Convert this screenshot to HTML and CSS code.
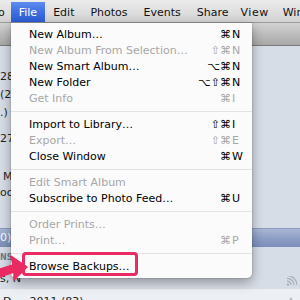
FILE: index.html
```html
<!DOCTYPE html>
<html>
<head>
<meta charset="utf-8">
<link rel="stylesheet" href="styles.css">
</head>
<body>
<div class="screen">
  <div class="menubar">
    <span class="mb-item mb-app">o</span>
    <span class="mb-item active">File</span>
    <span class="mb-item">Edit</span>
    <span class="mb-item">Photos</span>
    <span class="mb-item">Events</span>
    <span class="mb-item">Share</span>
    <span class="mb-item mb-view">View</span>
    <span class="mb-item">Window</span>
  </div>
  <div class="window">
    <div class="toolbar"></div>
    <div class="list">
      <div class="group g1">
        <div class="row">28</div>
        <div class="row">(2.</div>
        <div class="row">.)</div>
      </div>
      <div class="group g2">
        <div class="row">27</div>
      </div>
      <div class="group g3">
        <div class="row tight"><span class="ind">M</span></div>
        <div class="row tight">oo</div>
      </div>
      <div class="row selected">0)</div>
      <div class="row header">NS</div>
      <div class="row item">s, N
        <svg class="shared" width="12" height="10" viewBox="0 0 12 10"><circle cx="2" cy="8.5" r="1.2" fill="#a9b0bb"/><path d="M1 5.2a4 4 0 0 1 4.2 3.9M1 2.3a7 7 0 0 1 7.1 6.9M1 -0.6a10 10 0 0 1 10 9.8" fill="none" stroke="#a9b0bb" stroke-width="1.2"/></svg>
      </div>
      <div class="row item last"><span class="ind">D</span><span class="year">2011 (83)</span>
        <svg class="shared2" width="10" height="8" viewBox="0 0 10 8"><path d="M5 1 L9 8 L1 8 Z" fill="#b4bac4"/></svg>
      </div>
    </div>
  </div>

  <div class="menu">
    <div class="mi"><span class="lbl">New Album…</span><span class="sc"><span class="mods">⌘</span><span class="key">N</span></span></div>
    <div class="mi dis"><span class="lbl">New Album From Selection…</span><span class="sc"><span class="mods">⇧⌘</span><span class="key">N</span></span></div>
    <div class="mi"><span class="lbl">New Smart Album…</span><span class="sc"><span class="mods">⌥⌘</span><span class="key">N</span></span></div>
    <div class="mi"><span class="lbl">New Folder</span><span class="sc"><span class="mods">⌥⇧⌘</span><span class="key">N</span></span></div>
    <div class="mi dis"><span class="lbl">Get Info</span><span class="sc"><span class="mods">⌘</span><span class="key">I</span></span></div>
    <div class="sep"></div>
    <div class="mi"><span class="lbl">Import to Library…</span><span class="sc"><span class="mods">⇧⌘</span><span class="key">I</span></span></div>
    <div class="mi dis"><span class="lbl">Export…</span><span class="sc"><span class="mods">⇧⌘</span><span class="key">E</span></span></div>
    <div class="mi"><span class="lbl">Close Window</span><span class="sc"><span class="mods">⌘</span><span class="key">W</span></span></div>
    <div class="sep"></div>
    <div class="mi dis"><span class="lbl">Edit Smart Album</span></div>
    <div class="mi"><span class="lbl">Subscribe to Photo Feed…</span><span class="sc"><span class="mods">⌘</span><span class="key">U</span></span></div>
    <div class="sep"></div>
    <div class="mi dis"><span class="lbl">Order Prints…</span></div>
    <div class="mi dis"><span class="lbl">Print…</span><span class="sc"><span class="mods">⌘</span><span class="key">P</span></span></div>
    <div class="sep"></div>
    <div class="mi"><span class="lbl">Browse Backups…</span></div>
  </div>

  <div class="callout"></div>
  <svg class="arrow" width="30" height="36" viewBox="0 0 30 36">
    <path d="M-3 21 L13 16 L11 7 L27 18 L14 31 L14 23 L-3 29 Z" fill="#ea2a62" stroke="#ea2a62" stroke-width="1.5" stroke-linejoin="round"/>
  </svg>
</div>
</body>
</html>
```

FILE: styles.css
```css
html, body {
  margin: 0;
  padding: 0;
}
body {
  width: 300px;
  height: 300px;
  overflow: hidden;
  font-family: "DejaVu Sans", "Liberation Sans", sans-serif;
  font-size: 11px;
  color: #111;
}
.screen {
  position: relative;
  width: 300px;
  height: 300px;
  overflow: hidden;
  background: #d6dde6;
  display: flex;
  flex-direction: column;
}
.menubar {
  height: 23px;
  flex: none;
  display: flex;
  align-items: stretch;
  background: linear-gradient(#ececec, #e2e2e2 40%, #d3d3d3);
  border-bottom: 1px solid #9a9a9a;
  box-sizing: border-box;
}
.mb-item {
  display: flex;
  align-items: center;
  padding: 0 8px;
  color: #111;
  white-space: nowrap;
  margin-top: 2px;
}
.mb-app {
  padding: 0;
  margin-left: -2px;
  margin-right: 6px;
}
.mb-view {
  letter-spacing: 0.5px;
  padding: 0 6px 0 4px;
}
.mb-item.active {
  background: linear-gradient(#5f8cee, #3f6fe0 50%, #2c5cd6);
  color: #fff;
}
.window {
  flex: 1;
  display: flex;
  flex-direction: column;
}
.toolbar {
  height: 22px;
  flex: none;
  background: linear-gradient(#d3d3d3, #bdbdbd 50%, #a8a8a8);
  border-bottom: 1px solid #7a7a7a;
}
.list {
  flex: 1;
  display: flex;
  flex-direction: column;
  background: #d7dde6;
}
.row {
  height: 18px;
  line-height: 18px;
  white-space: nowrap;
  color: #1e1e1e;
  position: relative;
  flex: none;
}
.g1 { margin-top: 22px; }
.g2 { margin-top: 8px; }
.g3 { margin-top: 21px; }
.row.tight { height: 16px; line-height: 16px; }
.ind { padding-left: 3px; }
.row.selected {
  margin-top: 27px;
  background: linear-gradient(#a9b7d4, #8e9fc6 50%, #7b8eba);
  border-top: 1px solid #8a9bc3;
  color: #fff;
  height: 18px;
}
.row.header {
  height: 22px;
  line-height: 22px;
  font-size: 8px;
  font-weight: bold;
  color: #6f7a8a;
}
.row.item { height: 20px; line-height: 20px; }
.row.last {
  background: #eceff3;
  line-height: 26px;
  height: 26px;
}
.year { margin-left: 18px; }
.shared {
  position: absolute;
  right: 2px;
  top: 7px;
}
.shared2 {
  position: absolute;
  right: 4px;
  top: 7px;
}
.menu {
  position: absolute;
  left: 11px;
  top: 23px;
  width: 241px;
  padding: 3px 0 4px;
  background: #fbfbfb;
  border-radius: 0 0 5px 5px;
  box-shadow: 0 4px 12px rgba(0, 0, 0, 0.35), 0 0 0 1px rgba(0, 0, 0, 0.08);
  box-sizing: border-box;
}
.mi {
  display: flex;
  align-items: center;
  height: 16px;
  padding: 0 10px 0 18px;
  color: #000;
  white-space: nowrap;
}
.mi .lbl { flex: 1; }
.mi.dis { color: #a7a7a7; }
.sc {
  display: flex;
}
.mods { text-align: right; }
.key {
  width: 10px;
  padding-left: 1px;
}
.sep {
  height: 1px;
  background: #e3e3e3;
  margin: 5px 0 4px;
}
.callout {
  position: absolute;
  left: 22px;
  top: 252px;
  width: 116px;
  height: 24px;
  border: 3px solid #ea2a62;
  border-radius: 4px;
  box-sizing: border-box;
}
.arrow {
  position: absolute;
  left: 0;
  top: 249px;
}
```
